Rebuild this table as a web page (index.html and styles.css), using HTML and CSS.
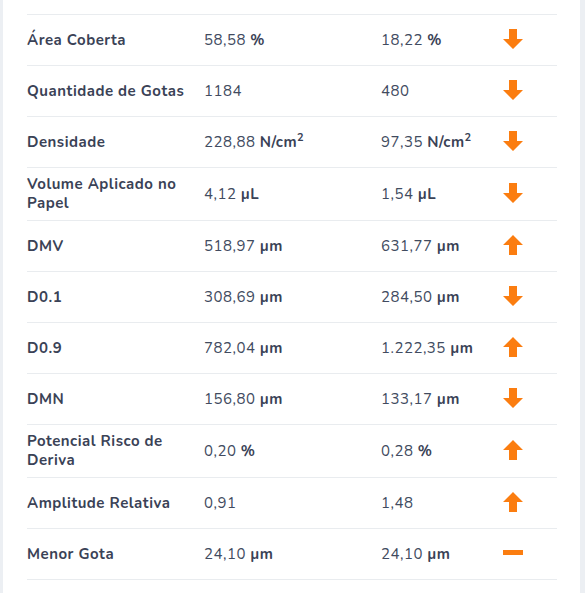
FILE: index.html
```html
<!DOCTYPE html>
<html lang="pt">
<head>
<meta charset="utf-8">
<link rel="stylesheet" href="styles.css">
</head>
<body>
<div class="card">
  <div class="table">
    <div class="row">
      <div class="label">Área Coberta</div>
      <div class="val">58,58 <b>%</b></div>
      <div class="val">18,22 <b>%</b></div>
      <div class="ico"><svg viewBox="0 0 20 20" width="20" height="20"><polygon class="arrow" points="6,0 14,0 14,10 20,10 10,20 0,10 6,10"/></svg></div>
    </div>
    <div class="row">
      <div class="label">Quantidade de Gotas</div>
      <div class="val">1184</div>
      <div class="val">480</div>
      <div class="ico"><svg viewBox="0 0 20 20" width="20" height="20"><polygon class="arrow" points="6,0 14,0 14,10 20,10 10,20 0,10 6,10"/></svg></div>
    </div>
    <div class="row">
      <div class="label">Densidade</div>
      <div class="val">228,88 <b>N/cm<sup>2</sup></b></div>
      <div class="val">97,35 <b>N/cm<sup>2</sup></b></div>
      <div class="ico"><svg viewBox="0 0 20 20" width="20" height="20"><polygon class="arrow" points="6,0 14,0 14,10 20,10 10,20 0,10 6,10"/></svg></div>
    </div>
    <div class="row two">
      <div class="label">Volume Aplicado no Papel</div>
      <div class="val">4,12 <b>µL</b></div>
      <div class="val">1,54 <b>µL</b></div>
      <div class="ico"><svg viewBox="0 0 20 20" width="20" height="20"><polygon class="arrow" points="6,0 14,0 14,10 20,10 10,20 0,10 6,10"/></svg></div>
    </div>
    <div class="row">
      <div class="label">DMV</div>
      <div class="val">518,97 <b>µm</b></div>
      <div class="val">631,77 <b>µm</b></div>
      <div class="ico"><svg viewBox="0 0 20 20" width="20" height="20"><polygon class="arrow" points="10,0 20,10 14,10 14,20 6,20 6,10 0,10"/></svg></div>
    </div>
    <div class="row">
      <div class="label">D0.1</div>
      <div class="val">308,69 <b>µm</b></div>
      <div class="val">284,50 <b>µm</b></div>
      <div class="ico"><svg viewBox="0 0 20 20" width="20" height="20"><polygon class="arrow" points="6,0 14,0 14,10 20,10 10,20 0,10 6,10"/></svg></div>
    </div>
    <div class="row">
      <div class="label">D0.9</div>
      <div class="val">782,04 <b>µm</b></div>
      <div class="val">1.222,35 <b>µm</b></div>
      <div class="ico"><svg viewBox="0 0 20 20" width="20" height="20"><polygon class="arrow" points="10,0 20,10 14,10 14,20 6,20 6,10 0,10"/></svg></div>
    </div>
    <div class="row">
      <div class="label">DMN</div>
      <div class="val">156,80 <b>µm</b></div>
      <div class="val">133,17 <b>µm</b></div>
      <div class="ico"><svg viewBox="0 0 20 20" width="20" height="20"><polygon class="arrow" points="6,0 14,0 14,10 20,10 10,20 0,10 6,10"/></svg></div>
    </div>
    <div class="row two">
      <div class="label">Potencial Risco de Deriva</div>
      <div class="val">0,20 <b>%</b></div>
      <div class="val">0,28 <b>%</b></div>
      <div class="ico"><svg viewBox="0 0 20 20" width="20" height="20"><polygon class="arrow" points="10,0 20,10 14,10 14,20 6,20 6,10 0,10"/></svg></div>
    </div>
    <div class="row">
      <div class="label">Amplitude Relativa</div>
      <div class="val">0,91</div>
      <div class="val">1,48</div>
      <div class="ico"><svg viewBox="0 0 20 20" width="20" height="20"><polygon class="arrow" points="10,0 20,10 14,10 14,20 6,20 6,10 0,10"/></svg></div>
    </div>
    <div class="row">
      <div class="label">Menor Gota</div>
      <div class="val">24,10 <b>µm</b></div>
      <div class="val">24,10 <b>µm</b></div>
      <div class="ico"><svg viewBox="0 0 20 20" width="20" height="20"><rect class="arrow" x="0" y="7" width="20" height="5"/></svg></div>
    </div>
  </div>
</div>
</body>
</html>
```

FILE: styles.css
```css
html, body {
  margin: 0;
  padding: 0;
}
body {
  background: #eceff3;
  font-family: "Nunito", "Lato", "Noto Sans", sans-serif;
  font-size: 15px;
  letter-spacing: 0.5px;
  color: #3a4256;
  height: 593px;
  overflow: hidden;
}
.card {
  margin-left: 3px;
  width: 577px;
  height: 593px;
  background: #ffffff;
  box-sizing: border-box;
  padding: 14px 23px 0 24px;
}
.table {
  border-top: 1px solid #e9ecef;
}
.row {
  display: grid;
  grid-template-columns: 177px 177px 122px 20px;
  align-items: center;
  min-height: 51px;
  box-sizing: border-box;
  border-bottom: 1px solid #e9ecef;
  padding: 6px 0;
}
.row.two {
  min-height: 53px;
}
.label {
  font-weight: 700;
  line-height: 19px;
  padding-right: 12px;
}
.val {
  line-height: 19px;
  color: #414b60;
}
.val b {
  font-weight: 700;
  color: #3a4256;
}
.val sup {
  font-size: 11px;
  line-height: 0;
  vertical-align: 6px;
}
.ico {
  display: flex;
  height: 20px;
  margin-top: -3px;
}
.arrow {
  fill: #fb7d10;
}
```
